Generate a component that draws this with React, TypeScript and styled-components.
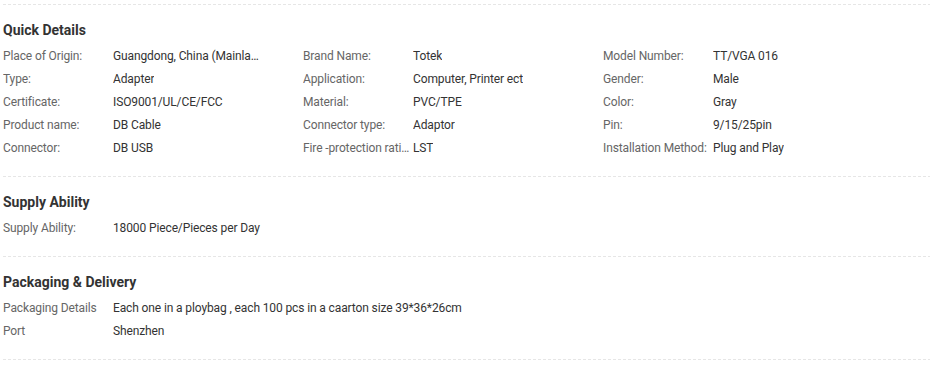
import React from "react";
import styled, { createGlobalStyle } from "styled-components";

const Global = createGlobalStyle`
  html, body { margin: 0; padding: 0; background: #fff; }
  body { font-family: Roboto, "Liberation Sans", Arial, sans-serif; }
`;

const dashes = "repeating-linear-gradient(to right, #e6e6e6 0 3px, transparent 3px 5px)";

const Page = styled.div`
  width: 927px;
  margin: 4px 0 0 3px;
`;

const Section = styled.section`
  padding: 16px 0 17px;
  background-image: ${dashes};
  background-size: 100% 1px;
  background-repeat: no-repeat;
  background-position: 0 0;
`;

const Footer = styled.div`
  height: 1px;
  background-image: ${dashes};
`;

const Heading = styled.h3`
  margin: 0 0 4px;
  font-size: 14px;
  line-height: 20px;
  font-weight: 700;
  color: #333;
`;

const Grid = styled.div<{ $cols: number }>`
  display: grid;
  grid-template-columns: repeat(${(p) => p.$cols}, 300px);
`;

const Row = styled.div<{ $wide?: boolean }>`
  display: flex;
  height: 23px;
  align-items: center;
  font-size: 12px;
  letter-spacing: -0.12px;
  ${(p) => (p.$wide ? "grid-column: 1 / -1;" : "")}
`;

const Label = styled.span`
  width: 110px;
  flex: none;
  color: #666;
  white-space: nowrap;
  overflow: hidden;
  text-overflow: ellipsis;
`;

const Value = styled.span<{ $clip?: boolean }>`
  color: #333;
  white-space: nowrap;
  ${(p) => (p.$clip ? "max-width: 150px; overflow: hidden; text-overflow: ellipsis;" : "")}
`;

const quick: [string, string][] = [
  ["Place of Origin:", "Guangdong, China (Mainland)"],
  ["Brand Name:", "Totek"],
  ["Model Number:", "TT/VGA 016"],
  ["Type:", "Adapter"],
  ["Application:", "Computer, Printer ect"],
  ["Gender:", "Male"],
  ["Certificate:", "ISO9001/UL/CE/FCC"],
  ["Material:", "PVC/TPE"],
  ["Color:", "Gray"],
  ["Product name:", "DB Cable"],
  ["Connector type:", "Adaptor"],
  ["Pin:", "9/15/25pin"],
  ["Connector:", "DB USB"],
  ["Fire -protection rating:", "LST"],
  ["Installation Method:", "Plug and Play"],
];

export default function App() {
  return (
    <>
      <Global />
      <Page>
        <Section>
          <Heading>Quick Details</Heading>
          <Grid $cols={3}>
            {quick.map(([l, v]) => (
              <Row key={l}>
                <Label>{l}</Label>
                <Value $clip>{v}</Value>
              </Row>
            ))}
          </Grid>
        </Section>
        <Section>
          <Heading>Supply Ability</Heading>
          <Grid $cols={3}>
            <Row $wide>
              <Label>Supply Ability:</Label>
              <Value>18000 Piece/Pieces per Day</Value>
            </Row>
          </Grid>
        </Section>
        <Section>
          <Heading>Packaging &amp; Delivery</Heading>
          <Grid $cols={3}>
            <Row $wide>
              <Label>Packaging Details</Label>
              <Value>Each one in a ploybag , each 100 pcs in a caarton size 39*36*26cm</Value>
            </Row>
            <Row $wide>
              <Label>Port</Label>
              <Value>Shenzhen</Value>
            </Row>
          </Grid>
        </Section>
        <Footer />
      </Page>
    </>
  );
}
